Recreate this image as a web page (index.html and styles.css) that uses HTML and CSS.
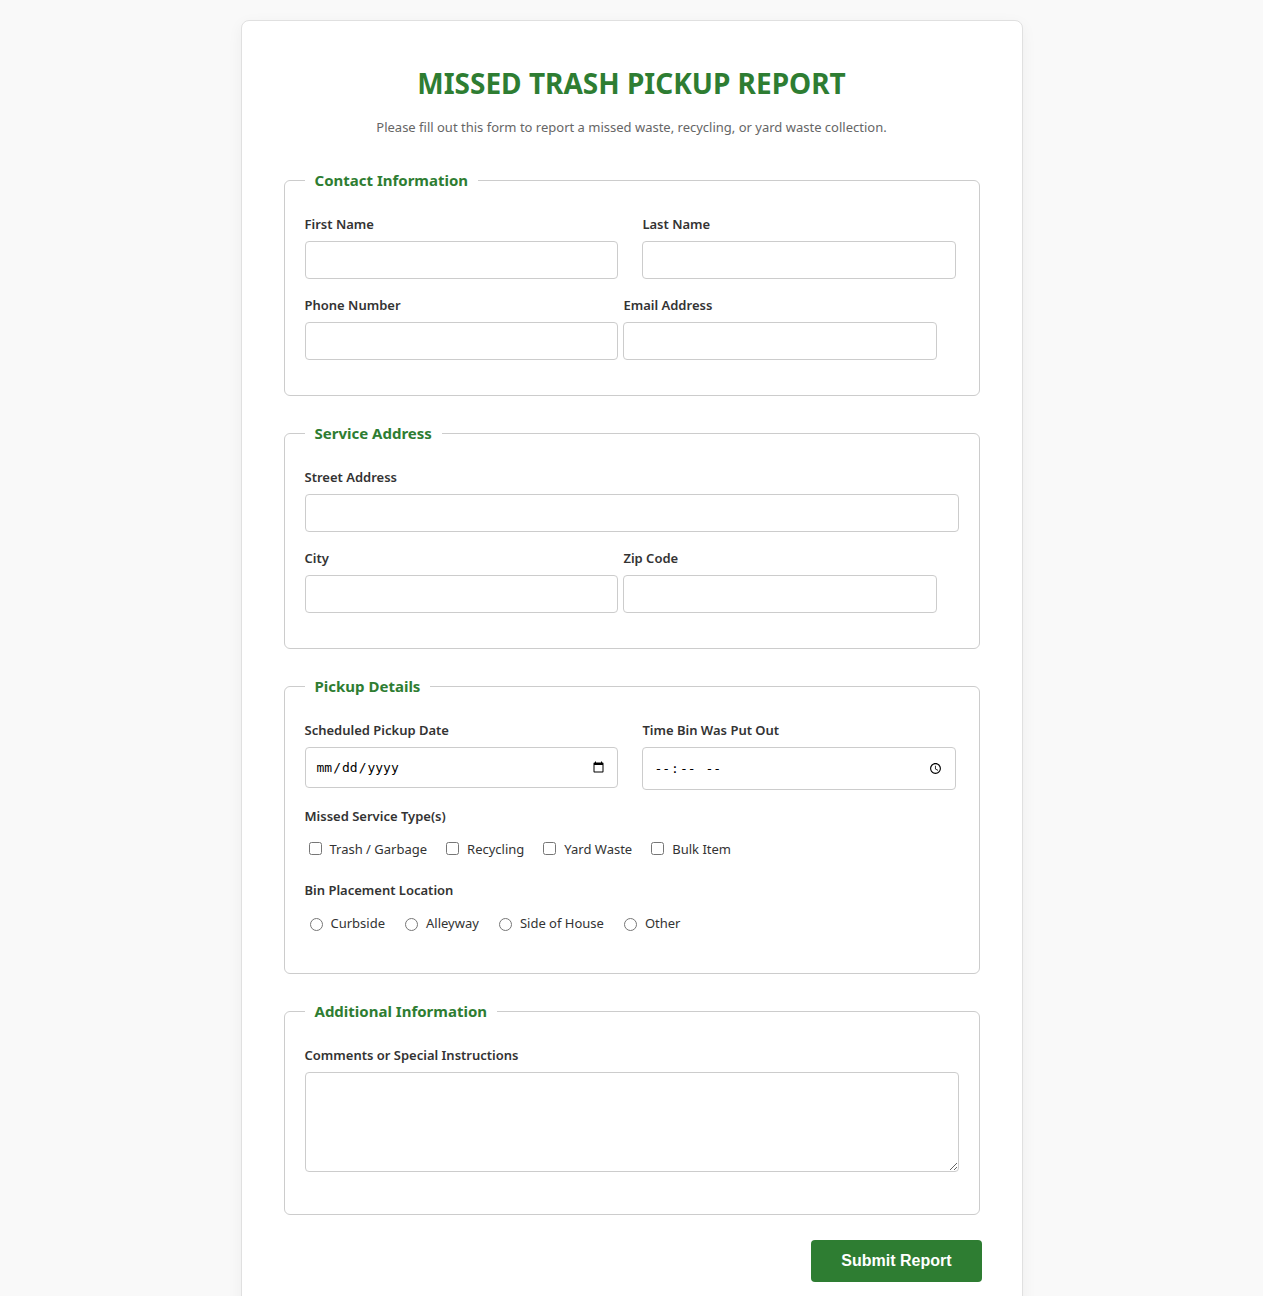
FILE: index.html
```html
<!DOCTYPE html>
<html lang="en">
<head>
    <meta charset="UTF-8">
    <meta name="viewport" content="width=device-width, initial-scale=1.0">
    <title>Missed Trash Pickup Report</title>
    <link rel="stylesheet" href="styles.css">
</head>
<body>
    <main class="container">
        <h1>Missed Trash Pickup Report</h1>
        <p class="subtitle">Please fill out this form to report a missed waste, recycling, or yard waste collection.</p>

        <form action="#" method="post">
            <fieldset>
                <legend>Contact Information</legend>
                <div class="row">
                    <div class="form-group half">
                        <label for="first-name">First Name</label>
                        <input type="text" id="first-name" name="first-name">
                    </div>
                    <div class="form-group half">
                        <label for="last-name">Last Name</label>
                        <input type="text" id="last-name" name="last-name">
                    </div>
                </div>
                <div class="row tight">
                    <div class="form-group half">
                        <label for="phone">Phone Number</label>
                        <input type="tel" id="phone" name="phone">
                    </div>
                    <div class="form-group half">
                        <label for="email">Email Address</label>
                        <input type="email" id="email" name="email">
                    </div>
                </div>
            </fieldset>

            <fieldset>
                <legend>Service Address</legend>
                <div class="form-group">
                    <label for="street">Street Address</label>
                    <input type="text" id="street" name="street">
                </div>
                <div class="row tight">
                    <div class="form-group half">
                        <label for="city">City</label>
                        <input type="text" id="city" name="city">
                    </div>
                    <div class="form-group half">
                        <label for="zip">Zip Code</label>
                        <input type="text" id="zip" name="zip">
                    </div>
                </div>
            </fieldset>

            <fieldset>
                <legend>Pickup Details</legend>
                <div class="row">
                    <div class="form-group half">
                        <label for="pickup-date">Scheduled Pickup Date</label>
                        <input type="date" id="pickup-date" name="pickup-date">
                    </div>
                    <div class="form-group half">
                        <label for="bin-time">Time Bin Was Put Out</label>
                        <input type="time" id="bin-time" name="bin-time">
                    </div>
                </div>
                <div class="form-group" role="group" aria-labelledby="service-label">
                    <span class="group-label" id="service-label">Missed Service Type(s)</span>
                    <div class="options">
                        <label><input type="checkbox" name="service" value="trash">Trash / Garbage</label>
                        <label><input type="checkbox" name="service" value="recycling">Recycling</label>
                        <label><input type="checkbox" name="service" value="yard">Yard Waste</label>
                        <label><input type="checkbox" name="service" value="bulk">Bulk Item</label>
                    </div>
                </div>
                <div class="form-group" role="radiogroup" aria-labelledby="location-label">
                    <span class="group-label" id="location-label">Bin Placement Location</span>
                    <div class="options">
                        <label><input type="radio" name="location" value="curbside">Curbside</label>
                        <label><input type="radio" name="location" value="alleyway">Alleyway</label>
                        <label><input type="radio" name="location" value="side">Side of House</label>
                        <label><input type="radio" name="location" value="other">Other</label>
                    </div>
                </div>
            </fieldset>

            <fieldset>
                <legend>Additional Information</legend>
                <div class="form-group">
                    <label for="comments">Comments or Special Instructions</label>
                    <textarea id="comments" name="comments"></textarea>
                </div>
            </fieldset>

            <div class="actions">
                <button type="submit">Submit Report</button>
            </div>
        </form>
    </main>
</body>
</html>
```
FILE: styles.css
```css
* {
    box-sizing: border-box;
}

body {
    margin: 0;
    padding: 20px;
    background-color: #f9f9f9;
    color: #333;
    font-family: 'Segoe UI', 'Noto Sans', sans-serif;
    font-size: 13px;
    line-height: 22px;
}

.container {
    max-width: 782px;
    margin: 0 auto;
    padding: 40px;
    background-color: #fff;
    border: 1px solid #e0e0e0;
    border-radius: 8px;
    box-shadow: 0 4px 15px rgba(0, 0, 0, 0.05);
}

h1 {
    margin: 0 0 10px;
    color: #2e7d32;
    font-size: 28px;
    line-height: 45px;
    text-align: center;
    text-transform: uppercase;
}

.subtitle {
    margin: 0 0 30px;
    color: #666;
    text-align: center;
}

fieldset {
    min-width: 0;
    margin: 0 2px 25px;
    padding: 20px;
    border: 1px solid #ccc;
    border-radius: 6px;
}

legend {
    padding: 0 10px;
    color: #2e7d32;
    font-size: 15px;
    font-weight: bold;
    line-height: 25px;
}

.row {
    display: flex;
    align-items: flex-start;
    gap: 24px;
}

.row.tight {
    gap: 5px;
}

.form-group {
    margin-bottom: 15px;
}

.half {
    width: 48%;
}

.form-group > label,
.group-label {
    display: block;
    margin-bottom: 6px;
    font-weight: 600;
}

input[type="text"],
input[type="tel"],
input[type="email"],
input[type="date"],
input[type="time"],
textarea {
    display: block;
    width: 100%;
    height: 38px;
    padding: 10px;
    background-color: #fff;
    border: 1px solid #ccc;
    border-radius: 4px;
    font-family: 'Noto Sans', sans-serif;
    font-size: 14px;
}

input[type="date"],
input[type="time"] {
    height: 41px;
    color: #000;
    font-family: 'DejaVu Sans Mono', monospace;
    font-size: 13px;
}

input[type="time"] {
    height: 43px;
}

textarea {
    height: 100px;
    margin-bottom: 22px;
    resize: vertical;
}

.options {
    display: flex;
    flex-wrap: wrap;
    gap: 0 15px;
}

.options label {
    display: flex;
    align-items: center;
    min-height: 31px;
}

.options input[type="checkbox"] {
    margin: 3px 8px 3px 4px;
}

.options input[type="radio"] {
    margin: 3px 8px 0 5px;
}

.actions {
    display: flex;
    justify-content: flex-end;
}

button {
    padding: 12px 30px;
    background-color: #2e7d32;
    color: #fff;
    border: none;
    border-radius: 4px;
    font-family: 'Liberation Sans', Arial, sans-serif;
    font-size: 16px;
    font-weight: bold;
    line-height: 18px;
    cursor: pointer;
}

button:hover {
    background-color: #1b5e20;
}
```
